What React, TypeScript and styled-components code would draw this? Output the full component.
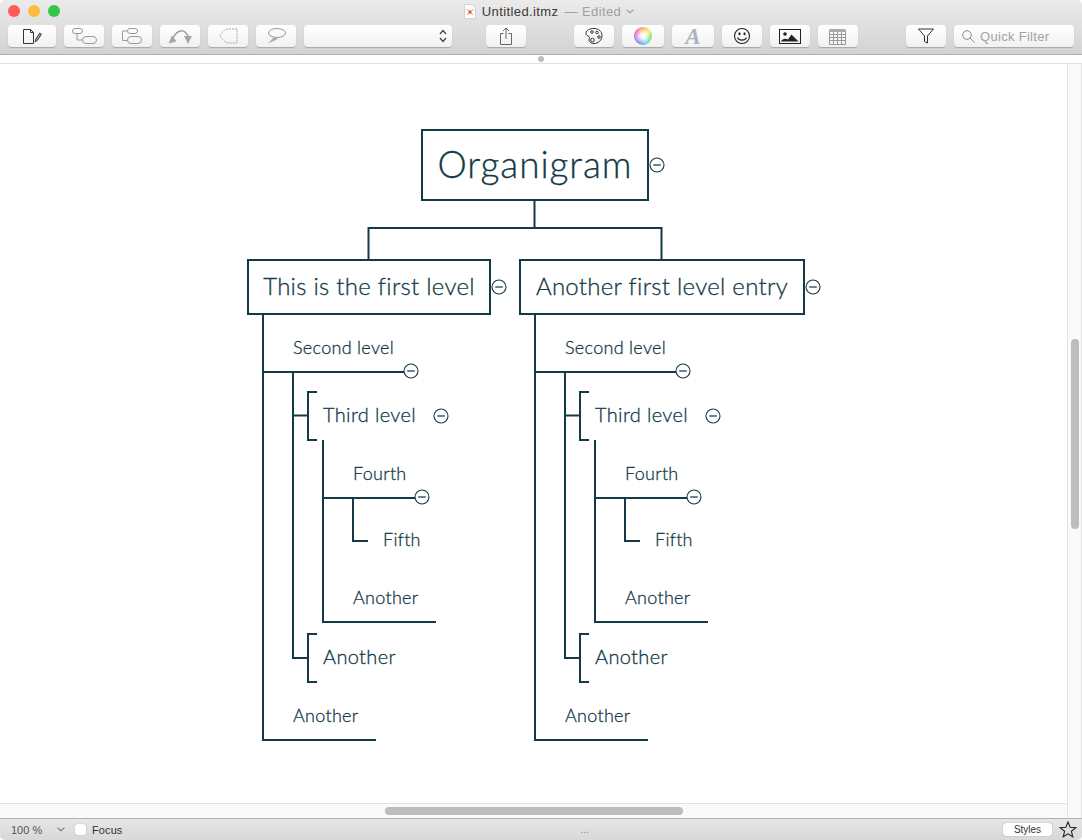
import React, { FC } from 'react';
import styled, { createGlobalStyle } from 'styled-components';

const NAVY = '#133a46';

const GlobalStyle = createGlobalStyle`
  html, body { margin: 0; padding: 0; background: #fff; overflow: hidden; }
  body { font-family: "Liberation Sans", Arial, sans-serif; }
`;

const ToolGlyph: FC<{ w?: number; h?: number; children: React.ReactNode }> = ({ w = 26, h = 20, children }) => (
  <svg width={w} height={h} viewBox={`0 0 ${w} ${h}`} fill="none">
    {children}
  </svg>
);

const Collapse: FC<{ x: number; y: number }> = ({ x, y }) => (
  <CollapseDot style={{ left: x - 8, top: y - 8 }}>
    <svg width="16" height="16" viewBox="0 0 16 16" fill="none">
      <circle cx="8" cy="8" r="7" fill="#fff" stroke={NAVY} strokeWidth="1.1" />
      <path d="M4.2 8h7.6" stroke="#4a6670" strokeWidth="1.6" />
    </svg>
  </CollapseDot>
);

const branchLines = (o: number) => [
  `M${o + 263} 315V740H${o + 376}`,
  `M${o + 263} 372H${o + 404}`,
  `M${o + 293} 372V658H${o + 308}`,
  `M${o + 293} 415.5H${o + 308}`,
  `M${o + 317} 392H${o + 308}V440H${o + 317}`,
  `M${o + 317} 634H${o + 308}V682H${o + 317}`,
  `M${o + 323} 440V622H${o + 436}`,
  `M${o + 323} 498H${o + 415}`,
  `M${o + 353} 498V541H${o + 368}`,
];

const Branch: FC<{ o: number }> = ({ o }) => (
  <>
    <Level2 style={{ left: o + 293, top: 336 }}>Second level</Level2>
    <Level1b style={{ left: o + 323, top: 402 }}>Third level</Level1b>
    <Level2 style={{ left: o + 353, top: 462 }}>Fourth</Level2>
    <Level2 style={{ left: o + 383, top: 528 }}>Fifth</Level2>
    <Level2 style={{ left: o + 353, top: 586 }}>Another</Level2>
    <Level1b style={{ left: o + 323, top: 644 }}>Another</Level1b>
    <Level2 style={{ left: o + 293, top: 704 }}>Another</Level2>
    <Collapse x={o + 411} y={371} />
    <Collapse x={o + 441} y={416} />
    <Collapse x={o + 422} y={497} />
  </>
);

const App: FC = () => (
  <Window>
    <GlobalStyle />
    <TitleBar>
      <TopRow>
        <Lights>
          <Light $c="#fc5b57" />
          <Light $c="#fdbb40" />
          <Light $c="#33c748" />
        </Lights>
        <Title>
          <DocIcon>
            <svg width="12" height="15" viewBox="0 0 12 15" fill="none">
              <path d="M.5.5h7.5l3.500 3.500v10.500h-11z" fill="#fff" stroke="#d0d0d0" />
              <circle cx="6" cy="8" r="1.700" fill="#e8552d" />
              <path d="M2.500 5l2 2M9.500 5l-2 2M3 11l2-2M9 11l-2-2" stroke="#ef8a5c" />
            </svg>
          </DocIcon>
          Untitled.itmz <Edited>— Edited</Edited>
          <svg width="8" height="5" viewBox="0 0 8 5" fill="none">
            <path d="M.5.700L4 3.700 7.500.700" stroke="#999" strokeWidth="1.100" />
          </svg>
        </Title>
      </TopRow>
      <Toolbar>
        <ToolButton $w={48}>
          <ToolGlyph w={22} h={16}>
            <path d="M2.500 1.500h7l3 3v11h-10z" stroke="#333" />
            <path d="M9.500 1.500v3h3" stroke="#333" />
            <path d="M14 14l.8-3 4-6 1.700 1.200-4 6z" stroke="#444" fill="#999" />
          </ToolGlyph>
        </ToolButton>
        <ToolButton $w={40} $ml={8}>
          <ToolGlyph w={25} h={16}>
            <rect x=".5" y=".5" width="10" height="5" rx="2.500" stroke="#999" />
            <rect x="10.500" y="8.500" width="14" height="7" rx="3.500" stroke="#999" />
            <path d="M5 5.500V12h5.500" stroke="#999" />
          </ToolGlyph>
        </ToolButton>
        <ToolButton $w={40} $ml={8}>
          <ToolGlyph w={20} h={16}>
            <rect x="5.500" y=".5" width="10" height="5" rx="2.500" stroke="#999" />
            <rect x="5.500" y="8.500" width="14" height="7" rx="3.500" stroke="#999" />
            <path d="M5.500 3H.5v9.500h5" stroke="#999" />
          </ToolGlyph>
        </ToolButton>
        <ToolButton $w={40} $ml={8}>
          <ToolGlyph w={25} h={16}>
            <path d="M5 10C9 2 16 0 20 8" stroke="#999" strokeWidth="1.300" />
            <path d="M.5 15.500l8-2-4.500-6zM16 8h8l-4 8z" fill="#a6a6a6" />
          </ToolGlyph>
        </ToolButton>
        <ToolButton $w={40} $ml={8}>
          <ToolGlyph w={19} h={16}>
            <path d="M18 1H8Q4 3 .7 7.500 4 12.500 8 15H18z" stroke="#a8a8a8" strokeDasharray="2 1" />
          </ToolGlyph>
        </ToolButton>
        <ToolButton $w={40} $ml={8}>
          <ToolGlyph w={19} h={16}>
            <ellipse cx="10" cy="5" rx="8.500" ry="4.500" stroke="#999" />
            <path d="M7 9L1 15.500l10-4.500z" fill="#aaa" />
          </ToolGlyph>
        </ToolButton>
        <StyleSelect>
          <svg width="8" height="14" viewBox="0 0 8 14" fill="none">
            <path d="M1 5l3-3.500L7 5M1 9l3 3.500L7 9" stroke="#444" strokeWidth="1.300" />
          </svg>
        </StyleSelect>
        <ToolButton $w={40} $ml={34}>
          <ToolGlyph w={14} h={18}>
            <path d="M4.500 6.500H1.500v11h11v-11h-3M7 12V1M4 4l3-3 3 3" stroke="#666" />
          </ToolGlyph>
        </ToolButton>
        <ToolButton $w={40} $ml={48}>
          <ToolGlyph w={18} h={18}>
            <path d="M9 1.500c5 0 8 3 8 7 0 5-4 8-8 8-3 0-5-1.500-5-3.500 0-1.500 1-2 0-3.500C3 8.500 1 9 1 6c0-3 4-4.500 8-4.500z" stroke="#333" />
            <circle cx="7" cy="5" r="1.300" stroke="#333" />
            <circle cx="12" cy="5.500" r="1.300" stroke="#333" />
            <circle cx="14" cy="10" r="1.300" stroke="#333" />
            <circle cx="7.500" cy="13" r="1.800" stroke="#333" />
          </ToolGlyph>
        </ToolButton>
        <ToolButton $w={42} $ml={8}>
          <ColorWheel />
        </ToolButton>
        <ToolButton $w={42} $ml={8}>
          <FontGlyph>A</FontGlyph>
        </ToolButton>
        <ToolButton $w={40} $ml={8}>
          <ToolGlyph w={18} h={18}>
            <circle cx="9" cy="9" r="7.500" stroke="#222" strokeWidth="1.100" />
            <ellipse cx="6.500" cy="6.800" rx="1.100" ry="1.500" fill="#222" />
            <ellipse cx="11.500" cy="6.800" rx="1.100" ry="1.500" fill="#222" />
            <path d="M4.500 10.500c1.500 3.500 7.500 3.500 9 0" stroke="#222" strokeWidth="1.100" />
          </ToolGlyph>
        </ToolButton>
        <ToolButton $w={40} $ml={8}>
          <ToolGlyph w={22} h={15}>
            <rect x=".5" y=".5" width="21" height="14" stroke="#222" />
            <circle cx="6" cy="5" r="1.800" fill="#222" />
            <path d="M2 12.500c1-3 5-3.500 7-2l3.500-5 3 3 4 4z" fill="#222" />
          </ToolGlyph>
        </ToolButton>
        <ToolButton $w={40} $ml={8}>
          <ToolGlyph w={18} h={17}>
            <path d="M.5 2.500h16v14H.5zM.5 6.500h16M.5 9.500h16M.5 12.500h16M4.500 2.500v14M8.500 2.500v14M12.500 2.500v14" stroke="#999" />
            <rect x=".5" y="1" width="16" height="3" fill="#aaa" />
          </ToolGlyph>
        </ToolButton>
        <ToolButton $w={40} $ml={48}>
          <ToolGlyph w={16} h={16}>
            <path d="M.5 1h15L9.500 8v7l-3-1.500V8z" stroke="#333" />
          </ToolGlyph>
        </ToolButton>
        <FilterBox>
          <svg width="13" height="13" viewBox="0 0 13 13" fill="none">
            <circle cx="5" cy="5" r="4.300" stroke="#888" />
            <path d="M8.200 8.200l4.300 4.300" stroke="#888" />
          </svg>
          Quick Filter
        </FilterBox>
      </Toolbar>
    </TitleBar>
    <Workspace>
      <Ruler>
        <RulerDot />
      </Ruler>
      <CanvasFrame>
        <Canvas>
          <Connectors width="1082" height="840" viewBox="0 0 1082 840" fill="none">
            <path d="M534.5 200V228M368.500 260V228H661.500V260" stroke={NAVY} strokeWidth="2" />
            {[0, 272].map((o) => (
              <path key={o} d={branchLines(o).join('')} stroke={NAVY} strokeWidth="2" />
            ))}
          </Connectors>
          <RootNode>Organigram</RootNode>
          <Collapse x={657} y={165} />
          <FirstNode style={{ left: 247, width: 244 }}>This is the first level</FirstNode>
          <Collapse x={499} y={287} />
          <FirstNode style={{ left: 519, width: 286 }}>Another first level entry</FirstNode>
          <Collapse x={813} y={287} />
          <Branch o={0} />
          <Branch o={272} />
          <ScrollThumbV />
          <ScrollThumbH />
        </Canvas>
      </CanvasFrame>
    </Workspace>
    <StatusBar>
      <Zoom>100 %</Zoom>
      <svg width="8" height="5" viewBox="0 0 8 5" fill="none">
        <path d="M.5.700L4 3.700 7.500.700" stroke="#777" strokeWidth="1.100" />
      </svg>
      <FocusBox />
      <FocusLabel>Focus</FocusLabel>
      <Dots>...</Dots>
      <StylesButton>Styles</StylesButton>
      <svg width="18" height="17" viewBox="0 0 18 17" fill="none">
        <path d="M9 1l2.100 5.300 5.700.4-4.400 3.600 1.400 5.500L9 12.800l-4.800 3 1.400-5.500L1.200 6.700l5.700-.4z" stroke="#222" strokeWidth="1.100" />
      </svg>
    </StatusBar>
  </Window>
);

const Window = styled.div`
  width: 1082px;
  height: 840px;
  display: flex;
  flex-direction: column;
  background: #fff;
  overflow: hidden;
`;

const TitleBar = styled.header`
  height: 55px;
  flex: none;
  box-sizing: border-box;
  padding: 0 8px;
  background: linear-gradient(#ebebeb, #d3d3d3);
  border-bottom: 1px solid #b1b1b1;
  border-radius: 5px 5px 0 0;
`;

const TopRow = styled.div`
  position: relative;
  height: 25px;
  display: flex;
  align-items: center;
  justify-content: center;
`;

const Lights = styled.div`
  position: absolute;
  left: 0;
  top: 5px;
  display: flex;
  gap: 8px;
`;

const Light = styled.span<{ $c: string }>`
  width: 12px;
  height: 12px;
  border-radius: 50%;
  background: ${(p) => p.$c};
`;

const Title = styled.div`
  display: flex;
  align-items: center;
  gap: 5px;
  margin: -3px 0 0 16px;
  font-size: 13px;
  letter-spacing: 0.4px;
  color: #3a3a3a;
  white-space: pre;
`;

const DocIcon = styled.span`
  display: flex;
  margin-right: 1px;
`;

const Edited = styled.span`
  margin-left: -3px;
  color: #a0a0a0;
`;

const Toolbar = styled.div`
  display: flex;
  align-items: center;
  height: 22px;
`;

const ToolButton = styled.div<{ $w: number; $ml?: number }>`
  width: ${(p) => p.$w}px;
  height: 22px;
  margin-left: ${(p) => p.$ml ?? 0}px;
  flex: none;
  box-sizing: border-box;
  display: flex;
  align-items: center;
  justify-content: center;
  border-radius: 4px;
  background: linear-gradient(#fff, #f1f1f1);
  box-shadow: 0 1px 1px rgba(0, 0, 0, 0.22);
`;

const StyleSelect = styled(ToolButton).attrs({ $w: 148, $ml: 8 })`
  justify-content: flex-end;
  padding-right: 5px;
`;

const ColorWheel = styled.span`
  width: 18px;
  height: 18px;
  border-radius: 50%;
  background:
    radial-gradient(circle, #fff 0, rgba(255, 255, 255, 0.85) 25%, rgba(255, 255, 255, 0) 75%),
    conic-gradient(#f9a13c, #f6e64a, #6fdc5c, #4fd3e0, #5a7cf0, #c55cf0, #f05a8c, #f9a13c);
`;

const FontGlyph = styled.span`
  font-family: "Liberation Serif", serif;
  font-style: italic;
  font-weight: 700;
  font-size: 23px;
  line-height: 1;
  color: #a9b2c0;
`;

const FilterBox = styled(ToolButton).attrs({ $w: 120, $ml: 8 })`
  justify-content: flex-start;
  gap: 5px;
  padding-left: 8px;
  font-size: 13px;
  letter-spacing: 0.3px;
  color: #a2a2a2;
`;

const Workspace = styled.main`
  flex: 1;
  min-height: 0;
  display: flex;
  flex-direction: column;
`;

const Ruler = styled.div`
  height: 9px;
  flex: none;
  display: flex;
  justify-content: center;
  align-items: center;
  box-sizing: border-box;
  border-bottom: 1px solid #e2e2e2;
`;

const RulerDot = styled.span`
  width: 6px;
  height: 6px;
  border-radius: 50%;
  background: #bdbdbd;
`;

const CanvasFrame = styled.div`
  flex: 1;
  min-height: 0;
  overflow: hidden;
  position: relative;
`;

// diagram coordinates are in window space, the frame starts at y=64
const Canvas = styled.div`
  position: absolute;
  left: 0;
  top: -64px;
  width: 1082px;
  height: 840px;
  font-family: Lato, sans-serif;
  font-weight: 300;
  -webkit-text-stroke: 0.3px ${NAVY};
  color: ${NAVY};

  &::before {
    content: '';
    position: absolute;
    left: 0;
    top: 803px;
    width: 1082px;
    height: 15px;
    background: #fafafa;
    border-top: 1px solid #e2e2e2;
    box-sizing: border-box;
  }
  &::after {
    content: '';
    position: absolute;
    left: 1067px;
    top: 64px;
    width: 15px;
    height: 754px;
    background: #fafafa;
    border-left: 1px solid #e2e2e2;
    border-right: 1px solid #e2e2e2;
    box-sizing: border-box;
  }
`;

const Connectors = styled.svg`
  position: absolute;
  left: 0;
  top: 0;
`;

const RootNode = styled.div`
  position: absolute;
  left: 421px;
  top: 129px;
  width: 228px;
  height: 72px;
  box-sizing: border-box;
  border: 2px solid ${NAVY};
  padding-bottom: 3px;
  background: #fff;
  display: flex;
  align-items: center;
  justify-content: center;
  font-size: 37px;
  letter-spacing: 0.9px;
`;

const FirstNode = styled.div`
  position: absolute;
  top: 259px;
  height: 56px;
  box-sizing: border-box;
  border: 2px solid ${NAVY};
  padding-bottom: 3px;
  background: #fff;
  display: flex;
  align-items: center;
  justify-content: center;
  font-size: 24px;
  letter-spacing: 0.27px;
  white-space: nowrap;
`;

const Level1b = styled.div`
  position: absolute;
  font-size: 20px;
  letter-spacing: 0.35px;
  line-height: 24px;
  white-space: nowrap;
`;

const Level2 = styled.div`
  position: absolute;
  font-size: 18px;
  letter-spacing: 0.3px;
  line-height: 22px;
  white-space: nowrap;
`;

const CollapseDot = styled.span`
  position: absolute;
  display: flex;
  width: 16px;
  height: 16px;
`;

const ScrollThumbV = styled.span`
  position: absolute;
  left: 1071px;
  top: 339px;
  width: 8px;
  height: 190px;
  border-radius: 4px;
  background: #bdbdbd;
  z-index: 1;
`;

const ScrollThumbH = styled.span`
  position: absolute;
  left: 385px;
  top: 807px;
  width: 298px;
  height: 8px;
  border-radius: 4px;
  background: #bdbdbd;
  z-index: 1;
`;

const StatusBar = styled.footer`
  height: 22px;
  flex: none;
  box-sizing: border-box;
  padding: 0 5px 0 11px;
  display: flex;
  align-items: center;
  background: linear-gradient(#e6e6e6, #d8d8d8);
  border-top: 1px solid #b1b1b1;
  border-radius: 0 0 5px 5px;
  font-size: 11px;
  color: #333;
`;

const Zoom = styled.span`
  width: 46px;
  color: #555;
`;

const FocusBox = styled.span`
  width: 11px;
  height: 11px;
  margin-left: 10px;
  background: #fff;
  border-radius: 2px;
  box-shadow: 0 0 1px rgba(0, 0, 0, 0.45);
`;

const FocusLabel = styled.span`
  margin-left: 6px;
  letter-spacing: 0.1px;
`;

const Dots = styled.span`
  margin-left: 458px;
  color: #888;
  font-size: 10px;
`;

const StylesButton = styled.div`
  margin-left: auto;
  margin-right: 7px;
  width: 49px;
  height: 13px;
  display: flex;
  align-items: center;
  justify-content: center;
  border-radius: 3px;
  background: #fff;
  font-size: 10px;
  box-shadow: 0 0 1px rgba(0, 0, 0, 0.5);
`;

export default App;
